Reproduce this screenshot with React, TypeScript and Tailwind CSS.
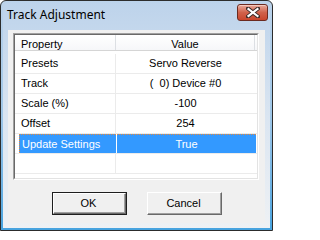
const ROWS = [
  { name: 'Presets', value: 'Servo Reverse' },
  { name: 'Track', value: '(  0) Device #0' },
  { name: 'Scale (%)', value: '-100' },
  { name: 'Offset', value: '254' },
  { name: 'Update Settings', value: 'True', selected: true },
  { name: '', value: '' },
]

const CloseButton = () => (
  <div className="ml-auto mr-[2px] mt-[1px] self-start flex items-center justify-center w-[31px] h-[17px] rounded-[3px] border border-[#6b2a20] bg-gradient-to-b from-[#e9a99b] via-[#d0624b] to-[#c9452c] shadow-[inset_0_1px_0_#f4c9bf]">
    <svg width="14" height="11" viewBox="0 0 14 11">
      <path d="M2 1.5 L12 9.5 M12 1.5 L2 9.5" stroke="#3a2a28" strokeWidth="4" strokeLinecap="square" />
      <path d="M2.5 2 L11.5 9 M11.5 2 L2.5 9" stroke="#ffffff" strokeWidth="2.2" strokeLinecap="square" />
    </svg>
  </div>
)

const Button = ({ label, isDefault }: { label: string; isDefault?: boolean }) => (
  <div className={isDefault ? 'border border-[#1e1e1e]' : ''}>
    <div
      className={
        isDefault
          ? 'w-[73px] h-[21px] border-t border-l border-b border-r border-t-white border-l-white border-b-[#696969] border-r-[#696969]'
          : 'w-[75px] h-[23px] border-t border-l border-b border-r border-t-white border-l-white border-b-[#696969] border-r-[#696969]'
      }
    >
      <div className="flex items-center justify-center w-full h-full bg-[#f0f0f0] border-b border-r border-b-[#a0a0a0] border-r-[#a0a0a0] text-[11px] text-black">
        {label}
      </div>
    </div>
  </div>
)

export default function App() {
  return (
    <div
      className="w-[273px] h-[231px] rounded-t-[6px] border border-[#2c2c2c] bg-gradient-to-b from-[#bcd3eb] via-[#9fc7e8] to-[#46a3df] p-[2px]"
      style={{ fontFamily: '"Liberation Sans", Arial, sans-serif' }}
    >
      <div className="flex flex-col h-full rounded-t-[4px] bg-gradient-to-b from-[#bdd3eb] via-[#dae5f1] to-[#eef1f4]">
        {/* caption */}
        <div className="flex h-[27px] shrink-0">
          <span
            className="self-center pl-[4px] pb-[3px] text-[12px] text-black"
            style={{ fontFamily: '"Noto Sans", "Open Sans", sans-serif' }}
          >
            Track Adjustment
          </span>
          <CloseButton />
        </div>

        {/* client */}
        <div className="flex flex-col h-[193px] mx-[5px] bg-[#f0f0f0] pt-[3px]">
          <div className="ml-[5px] w-[246px] h-[147px] border-t border-l border-b border-r border-t-[#a0a0a0] border-l-[#a0a0a0] border-b-white border-r-white">
            <div className="flex flex-col h-full bg-white border-t border-l border-b border-r border-t-[#696969] border-l-[#696969] border-b-[#e3e3e3] border-r-[#e3e3e3] text-[11px] text-black">
              {/* header */}
              <div className="flex h-[16px] shrink-0 border-b border-[#d5d5d5] bg-gradient-to-b from-white to-[#f6f7f9]">
                <div className="w-[101px] pl-[6px] pt-[1px] border-r border-[#dcdfe3]">Property</div>
                <div className="w-[139px] pt-[1px] text-center border-r border-[#dcdfe3]">Value</div>
              </div>
              <div className="h-[3px] shrink-0" />
              {ROWS.map((row, i) => (
                <div key={i} className="flex h-[20px] shrink-0 border-b border-[#ebebeb]">
                  <div
                    className={
                      row.selected
                        ? 'flex items-center w-[101px] pl-[4px]'
                        : 'flex items-center w-[101px] pl-[6px] border-r border-[#ebebeb]'
                    }
                  >
                    {row.selected ? (
                      <div className="flex items-center w-full h-full pl-[2px] bg-[#3399ff] text-white border-t border-l border-dotted border-[#e8893a]">
                        {row.name}
                      </div>
                    ) : (
                      row.name
                    )}
                  </div>
                  {row.selected ? (
                    <div className="flex items-center justify-center w-[139px] ml-[1px] bg-[#3399ff] text-white border-t border-dotted border-[#e8893a]">
                      {row.value}
                    </div>
                  ) : (
                    <div className="flex items-center justify-center w-[139px] whitespace-pre">{row.value}</div>
                  )}
                </div>
              ))}
            </div>
          </div>

          <div className="flex justify-center gap-[20px] mt-[12px]">
            <Button label="OK" isDefault />
            <Button label="Cancel" />
          </div>
        </div>
      </div>
    </div>
  )
}
